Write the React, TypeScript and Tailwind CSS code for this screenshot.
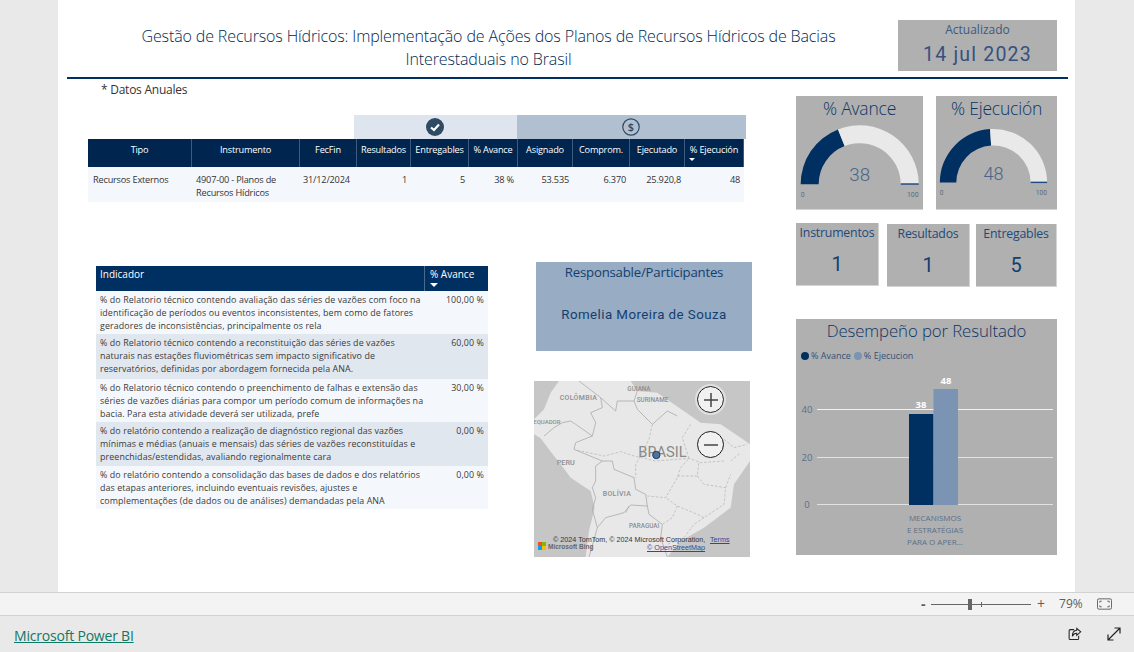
import React from 'react'

const NAVY = '#002f62'

const summaryHead = ['Tipo', 'Instrumento', 'FecFin', 'Resultados', 'Entregables', '% Avance', 'Asignado', 'Comprom.', 'Ejecutado', '% Ejecución']

const indicators = [
  {
    lines: [
      '% do Relatorio técnico contendo avaliação das séries de vazões com foco na',
      'identificação de períodos ou eventos inconsistentes, bem como de fatores',
      'geradores de inconsistências, principalmente os rela',
    ],
    value: '100,00 %',
    cls: 'h-[43px] bg-[#f4f8fd]',
  },
  {
    lines: [
      '% do Relatorio técnico contendo a reconstituição das séries de vazões',
      'naturais nas estações fluviométricas sem impacto significativo de',
      'reservatórios, definidas por abordagem fornecida pela ANA.',
    ],
    value: '60,00 %',
    cls: 'h-[45px] bg-[#e1e7ef]',
  },
  {
    lines: [
      '% do Relatorio técnico contendo o preenchimento de falhas e extensão das',
      'séries de vazões diárias para compor um período comum de informações na',
      'bacia. Para esta atividade deverá ser utilizada, prefe',
    ],
    value: '30,00 %',
    cls: 'h-[43px] bg-[#f4f8fd]',
  },
  {
    lines: [
      '% do relatório contendo a realização de diagnóstico regional das vazões',
      'mínimas e médias (anuais e mensais) das séries de vazões reconstituídas e',
      'preenchidas/estendidas, avaliando regionalmente cara',
    ],
    value: '0,00 %',
    cls: 'h-[44px] bg-[#e1e7ef]',
  },
  {
    lines: [
      '% do relatório contendo a consolidação das bases de dados e dos relatórios',
      'das etapas anteriores, incluindo eventuais revisões, ajustes e',
      'complementações (de dados ou de análises) demandadas pela ANA',
    ],
    value: '0,00 %',
    cls: 'h-[43px] bg-[#f4f8fd]',
  },
]

function polar(cx: number, cy: number, r: number, t: number) {
  const a = Math.PI * (1 - t)
  return `${(cx + r * Math.cos(a)).toFixed(2)} ${(cy - r * Math.sin(a)).toFixed(2)}`
}

function band(cx: number, cy: number, ro: number, ri: number, from: number, to: number) {
  return `M${polar(cx, cy, ro, from)} A${ro} ${ro} 0 0 1 ${polar(cx, cy, ro, to)} L${polar(cx, cy, ri, to)} A${ri} ${ri} 0 0 0 ${polar(cx, cy, ri, from)} Z`
}

function Gauge({
  title,
  value,
  cx,
  cy,
  ro,
  ri,
  className,
}: {
  title: string
  value: number
  cx: number
  cy: number
  ro: number
  ri: number
  className: string
}) {
  const f = value / 100
  return (
    <div className={`bg-[#b0b0b0] border-b border-[#d4d4d4] h-[114px] flex flex-col items-center ${className}`}>
      <div className="text-[17.5px] leading-[24px] text-[#0d3564] font-['Open_Sans',sans-serif] font-light tracking-[-0.2px]">
        {title}
      </div>
      <svg viewBox="0 0 127 90" className="w-full h-[90px]">
        <path d={band(cx, cy, ro, ri, 0, f)} fill={NAVY} />
        <path d={band(cx, cy, ro, ri, f, 1)} fill="#e9e9e9" />
        <rect x={cx + ri} y={cy - 1} width={ro - ri} height="1.5" fill="#1f4a7c" />
        <text x={cx} y={cy - 3} textAnchor="middle" fontSize="19" fill="#4a6587" fontFamily="Roboto, sans-serif" fontWeight="300">
          {value}
        </text>
        <text x={cx - ro + 2} y={cy + 13} textAnchor="middle" fontSize="7" fill="#5d6b7d" fontFamily="Roboto, sans-serif">
          0
        </text>
        <text x={cx + ro - 6} y={cy + 13} textAnchor="middle" fontSize="7" fill="#5d6b7d" fontFamily="Roboto, sans-serif">
          100
        </text>
      </svg>
    </div>
  )
}

function StatCard({ label, value, className }: { label: string; value: string; className: string }) {
  return (
    <div className={`h-[63px] bg-[#b0b0b0] border-b border-r border-[#d4d4d4] flex flex-col items-center ${className}`}>
      <div className="text-[12.3px] leading-[18px] mt-px text-[#1d4a78] font-['Open_Sans',sans-serif] tracking-[-0.2px]">{label}</div>
      <div className="text-[20px] leading-[24px] mt-[10px] text-[#123f70] font-['Roboto',sans-serif]">{value}</div>
    </div>
  )
}

function BrazilMap() {
  return (
    <div className="relative w-[216px] h-[176px] overflow-hidden bg-[#c6c6c6] font-['Roboto',sans-serif]">
      <svg viewBox="0 0 648 528" className="w-full h-full">
        <path
          d="M75 0 L50 35 L30 85 L0 115 L0 160 L20 172 L50 212 L80 250 L110 290 L170 330 L182 380 L165 450 L155 528 L400 528 L440 480 L510 440 L590 380 L600 310 L648 240 L648 190 L620 170 L560 130 L500 125 L420 70 L370 35 L310 30 L290 0 Z"
          fill="#e8e8e8"
        />
        <g fill="none" stroke="#adadad" strokeWidth="2.500" strokeLinejoin="round">
          <path d="M135 0 L200 50 L205 80 L170 95 L185 125 L175 165 L125 185 L120 205 L205 240 L185 255 L185 300 L175 320 L185 350 L175 385 L190 440 L165 528" />
          <path d="M30 165 L60 140 L85 125 L110 120 L125 130 L175 165" />
          <path d="M205 240 L235 240 L240 265 L300 290 L305 325 L335 340 L340 375 L290 372 L270 395 L215 410 L190 440" />
          <path d="M275 395 L285 375 M340 375 L345 400 L385 430 L380 470 L400 528" />
          <path d="M200 50 L245 90 L250 60 L300 60 L310 85 L355 130 L400 90 L430 105 M310 30 L300 60" />
        </g>
        <g fill="none" stroke="#b0b0b0" strokeWidth="2" strokeDasharray="8 5">
          <path d="M130 208 L210 225 L260 212 L300 225 L365 240 L465 232 L500 245 L570 240" />
          <path d="M355 130 L345 175 L320 225 L305 250 L305 290" />
          <path d="M470 130 L445 170 L465 232 L440 260 L430 290 L395 350 L340 345" />
          <path d="M430 285 L490 285 L495 240 M490 285 L510 310 L575 320 L570 370 L510 410 L490 400 L430 375 L395 350" />
          <path d="M430 375 L415 410 L385 430 M510 410 L480 430 L450 470 L400 490" />
          <path d="M570 175 L600 200 L640 190 M590 240 L620 215 M575 320 L590 280" />
        </g>
        <g fill="#8e8e8e" fontWeight="500">
          <text x="77" y="58" fontSize="21" letterSpacing="1">COLÔMBIA</text>
          <text x="280" y="29" fontSize="19">GUIANA</text>
          <text x="308" y="64" fontSize="19">SURINAME</text>
          <text x="-2" y="130" fontSize="18">EQUADOR</text>
          <text x="68" y="253" fontSize="22">PERU</text>
          <text x="313" y="228" fontSize="44" fontWeight="400" fill="#8a8a8a">BRASIL</text>
          <text x="206" y="344" fontSize="21" letterSpacing="1">BOLÍVIA</text>
          <text x="285" y="440" fontSize="19">PARAGUAI</text>
        </g>
        <circle cx="367" cy="222" r="11" fill="#4f739c" stroke="#1f3c5e" strokeWidth="3" />
      </svg>
      <button className="absolute left-[163px] top-[5px] w-[27px] h-[27px] rounded-full bg-[#f1f1f1] border-[1.5px] border-[#1b1b1b] outline-2 outline-[#e0e0e0] flex items-center justify-center">
        <svg viewBox="0 0 16 16" className="w-[16px] h-[16px]" stroke="#444" strokeWidth="1.5">
          <path d="M1 8 H15 M8 1 V15" />
        </svg>
      </button>
      <button className="absolute left-[163px] top-[50px] w-[27px] h-[27px] rounded-full bg-[#f1f1f1] border-[1.5px] border-[#1b1b1b] flex items-center justify-center">
        <svg viewBox="0 0 16 16" className="w-[16px] h-[16px]" stroke="#444" strokeWidth="1.5">
          <path d="M1 8 H15" />
        </svg>
      </button>
      <div className="absolute left-[19px] top-[156px] text-[7.2px] leading-[6px] text-[#333] whitespace-nowrap font-['Liberation_Sans',sans-serif]">
        © 2024 TomTom, © 2024 Microsoft Corporation,
      </div>
      <div className="absolute left-[176px] top-[156px] text-[7.2px] leading-[6px] text-[#33479a] underline font-['Liberation_Sans',sans-serif]">
        Terms
      </div>
      <div className="absolute left-[113px] top-[164px] text-[7.2px] leading-[6px] text-[#33479a] underline whitespace-nowrap font-['Liberation_Sans',sans-serif]">
        © OpenStreetMap
      </div>
      <div className="absolute left-[4px] top-[161px] flex items-center gap-[2px]">
        <div className="grid grid-cols-2 w-[8px] h-[8px]">
          <span className="bg-[#f25022]" />
          <span className="bg-[#7fba00]" />
          <span className="bg-[#00a4ef]" />
          <span className="bg-[#ffb900]" />
        </div>
        <span className="text-[6.5px] leading-[6px] mt-px font-semibold text-[#666] font-['Liberation_Sans',sans-serif]">Microsoft Bing</span>
      </div>
    </div>
  )
}

function ResultChart() {
  return (
    <div className="h-[236px] bg-[#b0b0b0] flex flex-col">
      <div className="text-[16.8px] leading-[24px] text-center text-[#0d3564] font-['Open_Sans',sans-serif] font-light tracking-[-0.1px]">
        Desempeño por Resultado
      </div>
      <div className="flex items-center mt-[7px] ml-[5px] h-[12px] text-[9px] leading-[12px] text-[#33527a] font-['Open_Sans',sans-serif]">
        <span className="w-[8px] h-[8px] rounded-full bg-[#002f62] mr-[2px]" />
        <span className="mr-[3px]">% Avance</span>
        <span className="w-[8px] h-[8px] rounded-full bg-[#7b94b4] mr-[2px]" />
        <span>% Ejecucion</span>
      </div>
      <svg viewBox="0 0 261 193" className="w-[261px] h-[193px]" fontFamily="Open Sans, sans-serif">
        <g stroke="#e2e2e2" strokeWidth="1">
          <path d="M21 47.500 H257" stroke="#f2f2f2" />
          <path d="M21 95.500 H257" />
          <path d="M21 142.500 H257" />
        </g>
        <rect x="113" y="52" width="24.500" height="91" fill={NAVY} />
        <rect x="137.500" y="27" width="24.500" height="116" fill="#7b94b4" />
        <g fill="#ffffff" fontSize="9.500" fontWeight="700" textAnchor="middle">
          <text x="125" y="46">38</text>
          <text x="150" y="22">48</text>
        </g>
        <g fill="#5a6f88" fontSize="9.500" textAnchor="middle">
          <text x="11" y="50.500">40</text>
          <text x="11" y="98.500">20</text>
          <text x="11" y="145.500">0</text>
        </g>
        <g fill="#5a6f88" fontSize="8" textAnchor="middle">
          <text x="139" y="159">MECANISMOS</text>
          <text x="139" y="171">E ESTRATÉGIAS</text>
          <text x="139" y="183">PARA O APER...</text>
        </g>
      </svg>
    </div>
  )
}

export default function App() {
  return (
    <div className="w-[1134px] h-[652px] flex flex-col overflow-hidden bg-[#e9e9e9] font-['Open_Sans',sans-serif]">
      {/* report page */}
      <div className="h-[592px] shrink-0 ml-[58px] w-[1017px] bg-white flex flex-col">
        <header className="h-[77px] shrink-0 flex items-start pl-[52px] pr-[18px]">
          <h1 className="w-[757px] mt-[25px] text-center text-[16px] leading-[23px] font-light tracking-[-0.13px] text-[#002a55]">
            Gestão de Recursos Hídricos: Implementação de Ações dos Planos de Recursos Hídricos de Bacias
            <br />
            Interestaduais no Brasil
          </h1>
          <div className="ml-auto mt-[20px] w-[159px] h-[51px] bg-[#b0b0b0] flex flex-col items-center">
            <div className="text-[12px] leading-[18px] mt-px text-[#3b5a80]">Actualizado</div>
            <div className="text-[19.5px] leading-[24px] mt-[4px] tracking-[1.2px] text-[#34527e] font-['Roboto',sans-serif]">14 jul 2023</div>
          </div>
        </header>
        <div className="h-[2px] shrink-0 ml-[9px] w-[1001px] bg-[#002f62]" />

        <div className="flex pl-[30px]">
          <div className="w-[664px] shrink-0 flex flex-col">
            <div className="mt-[2px] ml-[13px] text-[12px] leading-[18px] text-[#333] tracking-[-0.25px]">* Datos Anuales</div>

            {/* icon band */}
            <div className="mt-[16px] ml-[266px] w-[392px] h-[24px] flex">
              <div className="w-[163px] bg-[#dfe5ee] flex items-center pl-[72px]">
                <svg viewBox="0 0 18 18" className="w-[18px] h-[18px]">
                  <circle cx="9" cy="9" r="9" fill="#2f4a63" />
                  <path d="M5 9.500 L8 12 L13 6.500" fill="none" stroke="#fff" strokeWidth="2.200" />
                </svg>
              </div>
              <div className="flex-1 bg-[#b0c0d0] flex items-center pl-[105px]">
                <svg viewBox="0 0 18 18" className="w-[18px] h-[18px]">
                  <circle cx="9" cy="9" r="8.200" fill="none" stroke="#2f4a63" strokeWidth="1.200" />
                  <text x="9" y="13" textAnchor="middle" fontSize="11" fontWeight="600" fill="#2f4a63" fontFamily="Open Sans, sans-serif">
                    $
                  </text>
                </svg>
              </div>
            </div>

            {/* summary table */}
            <div className="w-[656px] grid grid-cols-[104px_108px_57px_54px_58px_49px_55px_57px_55px_59px] text-[9.2px] tracking-[-0.2px]">
              {summaryHead.map((label) => (
                <div
                  key={label}
                  className="relative h-[28px] bg-[#00264f] border-r border-[#3d5a7c] last:border-r-0 text-white flex items-center justify-center whitespace-nowrap pb-[6px]"
                >
                  {label}
                  {label === '% Ejecución' && (
                    <span className="absolute left-[4px] top-[19px] w-0 h-0 border-x-[3px] border-x-transparent border-t-[3px] border-t-white" />
                  )}
                </div>
              ))}
              <div className="h-[35px] bg-[#f4f8fd] pl-[5px] pt-[6px] leading-[13px] text-[#333]">Recursos Externos</div>
              <div className="h-[35px] bg-[#f4f8fd] pl-[4px] pt-[6px] leading-[13px] text-[#333]">
                4907-00 - Planos de
                <br />
                Recursos Hídricos
              </div>
              <div className="h-[35px] bg-[#f4f8fd] pl-[3px] pt-[6px] leading-[13px] text-[#333]">31/12/2024</div>
              {['1', '5', '38 %', '53.535', '6.370', '25.920,8', '48'].map((v) => (
                <div key={v} className="h-[35px] bg-[#f4f8fd] pt-[6px] pr-[4px] leading-[13px] text-right text-[#333]">
                  {v}
                </div>
              ))}
            </div>

            <div className="flex items-start mt-[60px]">
              {/* indicator table */}
              <div className="mt-[4px] ml-[8px] w-[392px] text-[8.9px] leading-[13px] tracking-[0.09px] text-[#3a3a3a]">
                <div className="flex h-[25px] bg-[#002f62] text-white text-[10px] tracking-normal">
                  <div className="w-[329px] pl-[4px] pt-[2px] border-r border-[#4a6a8c]">Indicador</div>
                  <div className="relative flex-1 pl-[5px] pt-[2px]">
                    % Avance
                    <span className="absolute left-[5px] top-[17px] w-0 h-0 border-x-[4px] border-x-transparent border-t-[4px] border-t-white" />
                  </div>
                </div>
                {indicators.map((row) => (
                  <div key={row.lines[0]} className={`flex ${row.cls}`}>
                    <div className="w-[329px] pl-[4px] pt-[2px] whitespace-nowrap">
                      {row.lines.map((l) => (
                        <div key={l}>{l}</div>
                      ))}
                    </div>
                    <div className="flex-1 pr-[4px] pt-[2px] text-right">{row.value}</div>
                  </div>
                ))}
              </div>

              <div className="ml-[46px] w-[218px] flex flex-col">
                <div className="ml-[2px] w-[216px] h-[89px] bg-[#98acc3] flex flex-col items-center">
                  <div className="mt-px text-[13.2px] leading-[18px] text-[#123f70] tracking-[-0.2px]">Responsable/Participantes</div>
                  <div className="mt-[25px] text-[13.3px] leading-[18px] tracking-[0.45px] text-[#123f70] font-['Roboto',sans-serif]">
                    Romelia Moreira de Souza
                  </div>
                </div>
                <div className="mt-[30px]">
                  <BrazilMap />
                </div>
              </div>
            </div>
          </div>

          {/* right column */}
          <div className="ml-[44px] w-[261px] shrink-0 flex flex-col pt-[17px]">
            <div className="flex gap-[13px]">
              <Gauge title="% Avance" value={38} cx={63.7} cy={65} ro={59.7} ri={41.5} className="w-[127px]" />
              <Gauge title="% Ejecución" value={48} cx={60.3} cy={64} ro={56.3} ri={39} className="w-[121px]" />
            </div>
            <div className="flex items-start mt-[13px]">
              <StatCard label="Instrumentos" value="1" className="w-[83px]" />
              <StatCard label="Resultados" value="1" className="w-[83px] ml-[8px] mt-px" />
              <StatCard label="Entregables" value="5" className="w-[81px] ml-[6px] mt-px" />
            </div>
            <div className="mt-[32px]">
              <ResultChart />
            </div>
          </div>
        </div>
      </div>

      {/* zoom bar */}
      <div className="h-[24px] shrink-0 bg-[#f3f3f3] border-y border-[#d2d2d2] flex items-center text-[#605e5c]">
        <span className="ml-[921px] w-[6px] text-[14px] leading-none font-bold">-</span>
        <div className="relative ml-[4px] w-[100px] h-px bg-[#666]">
          <span className="absolute left-[37px] -top-[5px] w-[4px] h-[11px] bg-[#666]" />
          <span className="absolute left-[50px] -top-[2px] w-px h-[5px] bg-[#666]" />
        </div>
        <span className="ml-[6px] text-[14px] leading-none">+</span>
        <span className="ml-[14px] text-[12px] leading-none">79%</span>
        <svg viewBox="0 0 16 12" className="ml-[14px] w-[15px] h-[12px]" fill="none" stroke="#605e5c">
          <rect x="0.500" y="0.500" width="15" height="11" rx="1.500" />
          <path d="M3 4.500 V3 H5 M11 3 H13 V4.500 M13 7.500 V9 H11 M5 9 H3 V7.500" />
        </svg>
      </div>

      {/* footer */}
      <footer className="flex-1 flex items-center pl-[14px]">
        <a className="mt-[4px] text-[14px] leading-[18px] tracking-[-0.2px] text-[#117865] underline">Microsoft Power BI</a>
        <svg viewBox="0 0 16 16" className="ml-[934px] w-[14px] h-[14px]" fill="none" stroke="#252423" strokeWidth="1.200">
          <path d="M7 3 H2.500 A1.200 1.200 0 0 0 1.300 4.200 V13 A1.200 1.200 0 0 0 2.500 14.200 H11 A1.200 1.200 0 0 0 12.200 13 V10" />
          <path d="M10 1.500 L14.500 5.500 L10 9.500 V7.200 C7.500 7.200 6 8.200 5 10.500 C5 6.500 7 4 10 3.800 Z" />
        </svg>
        <svg viewBox="0 0 14 14" className="ml-[25px] w-[14px] h-[14px]" fill="none" stroke="#252423" strokeWidth="1.200">
          <path d="M1 13 L13 1 M7.500 1 H13 V6.500 M1 7.500 V13 H6.500" />
        </svg>
      </footer>
    </div>
  )
}
